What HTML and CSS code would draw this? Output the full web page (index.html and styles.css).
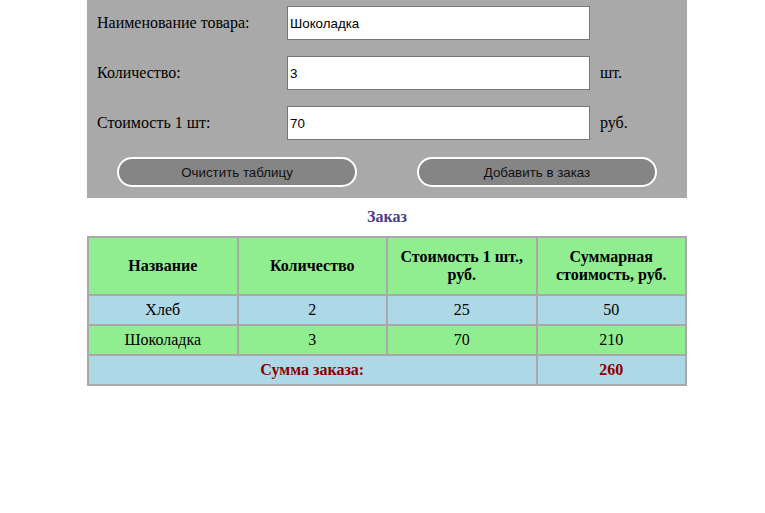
FILE: index.html
```html
<!DOCTYPE html>
<html lang="ru">
<head>
<meta charset="utf-8">
<title>Заказ</title>
<link rel="stylesheet" href="styles.css">
</head>
<body>
<div class="page">
  <form class="panel">
    <div class="fields">
      <label class="label" for="name">Наименование товара:</label>
      <input class="field" id="name" type="text" value="Шоколадка">
      <span class="unit"></span>
      <label class="label" for="qty">Количество:</label>
      <input class="field" id="qty" type="text" value="3">
      <span class="unit">шт.</span>
      <label class="label" for="price">Стоимость 1 шт:</label>
      <input class="field" id="price" type="text" value="70">
      <span class="unit">руб.</span>
    </div>
    <div class="actions">
      <div class="action-cell"><button type="button" class="btn">Очистить таблицу</button></div>
      <div class="action-cell"><button type="button" class="btn">Добавить в заказ</button></div>
    </div>
  </form>
  <div class="title">Заказ</div>
  <table class="order">
    <thead>
      <tr>
        <th>Название</th>
        <th>Количество</th>
        <th>Стоимость 1 шт., руб.</th>
        <th>Суммарная стоимость, руб.</th>
      </tr>
    </thead>
    <tbody>
      <tr class="row-blue"><td>Хлеб</td><td>2</td><td>25</td><td>50</td></tr>
      <tr class="row-green"><td>Шоколадка</td><td>3</td><td>70</td><td>210</td></tr>
      <tr class="row-blue total"><td colspan="3">Сумма заказа:</td><td>260</td></tr>
    </tbody>
  </table>
</div>
</body>
</html>
```
FILE: styles.css
```css
html, body {
  margin: 0;
  padding: 0;
  background: #ffffff;
}
body {
  font-family: "Liberation Serif", "Times New Roman", serif;
  font-size: 16px;
  color: #000;
}
.page {
  width: 600px;
  margin-left: 87px;
}
.panel {
  background: #a9a9a9;
  padding: 6px 0 11px 10px;
  margin: 0;
}
.fields {
  display: grid;
  grid-template-columns: 180px 303px auto;
  column-gap: 10px;
  row-gap: 16px;
  align-items: center;
}
.label {
  line-height: 18px;
}
.field {
  box-sizing: border-box;
  width: 303px;
  height: 34px;
  margin: 0;
  padding: 1px 2px;
  border: 1px solid #767676;
  background: #fff;
  font-family: "Liberation Sans", Arial, sans-serif;
  font-size: 13.333px;
  color: #000;
  outline: none;
}
.unit {
  line-height: 18px;
}
.actions {
  display: flex;
  margin-top: 17px;
  margin-left: -10px;
}
.action-cell {
  flex: 1;
  display: flex;
  justify-content: center;
}
.btn {
  box-sizing: border-box;
  width: 240px;
  height: 30px;
  margin: 0;
  padding: 0;
  border: 2px solid #ffffff;
  border-radius: 15px;
  background: #858585;
  font-family: "Liberation Sans", Arial, sans-serif;
  font-size: 13.333px;
  color: #111;
}
.title {
  margin: 10px 0 10px;
  line-height: 18px;
  text-align: center;
  font-weight: bold;
  color: #483d8b;
}
.order {
  width: 600px;
  border-collapse: collapse;
  table-layout: fixed;
  border: 2px solid #a9a9a9;
}
.order th,
.order td {
  border: 2px solid #a9a9a9;
  text-align: center;
  line-height: 18px;
}
.order th {
  background: #90ee90;
  padding: 10px 4px;
  font-weight: bold;
}
.order td {
  padding: 5px 4px;
}
.row-blue {
  background: #add8e6;
}
.row-green {
  background: #90ee90;
}
.total td {
  font-weight: bold;
  color: #8b0000;
}
```
